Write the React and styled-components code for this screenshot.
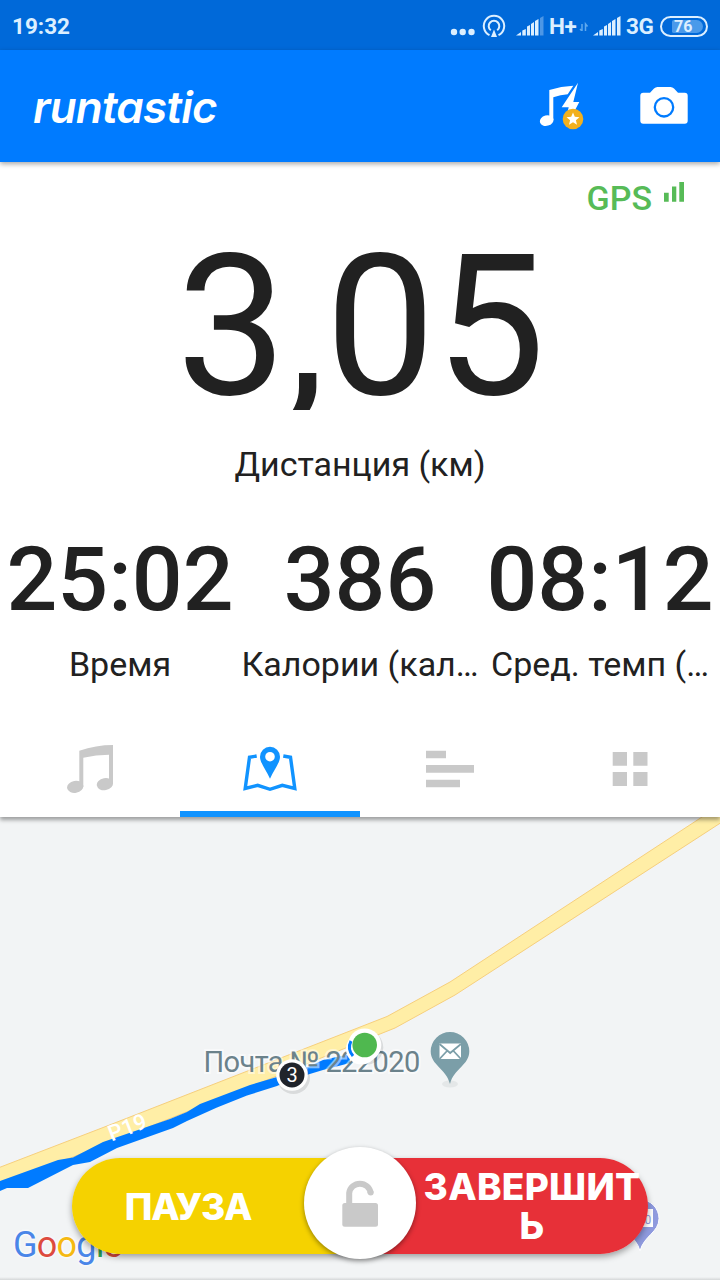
import React from 'react'
import styled, { createGlobalStyle } from 'styled-components'

const GlobalStyle = createGlobalStyle`
  * {
    box-sizing: border-box;
  }

  body {
    margin: 0;
    background: #fff;
    font-family: Roboto, sans-serif;
  }
`

const Screen = styled.div`
  display: flex;
  flex-direction: column;
  width: 720px;
  height: 1280px;
  overflow: hidden;
  color: #212121;
`

const Icon = styled.svg`
  display: block;
  flex: none;
`

const StatusBar = styled.div`
  display: flex;
  align-items: center;
  justify-content: space-between;
  flex: none;
  height: 50px;
  padding: 2px 12px 0 12px;
  background: #0069d9;
  color: #dcefff;
`

const Clock = styled.span`
  font-size: 22.5px;
  font-weight: 700;
`

const StatusIcons = styled.div`
  display: flex;
  align-items: center;
`

const Network = styled.span`
  width: 28px;
  margin-left: 5px;
  font-size: 22.5px;
  font-weight: 700;
  letter-spacing: -0.5px;
  white-space: nowrap;
`

const Battery = styled.div`
  display: flex;
  align-items: center;
  width: 48px;
  height: 21px;
  margin-left: 6px;
  padding-left: 10px;
  border: 2px solid #dcefff;
  border-radius: 11px;
`

const Charge = styled.div`
  width: 31px;
  height: 13px;
  padding-left: 2px;
  border-radius: 2px 7px 7px 2px;
  background: #4a9aea;
  font-size: 16px;
  font-weight: 700;
  line-height: 13px;
`

const AppBar = styled.header`
  position: relative;
  z-index: 1;
  display: flex;
  align-items: center;
  flex: none;
  height: 112px;
  padding: 0 32px 0 33px;
  background: #007bff;
  box-shadow: 0 2px 5px rgba(0, 0, 0, 0.35);
`

const Logo = styled.div`
  flex: 1;
  padding-top: 2px;
  color: #fff;
  font-family: Inter, sans-serif;
  font-feature-settings: 'cv11';
  font-size: 44px;
  font-style: italic;
  font-weight: 600;
  letter-spacing: -0.8px;
`

const Actions = styled.div`
  display: flex;
  align-items: center;
  gap: 56px;
`

const Stats = styled.main`
  display: flex;
  flex-direction: column;
  flex: none;
  height: 558px;
`

const Gps = styled.div`
  display: flex;
  justify-content: flex-end;
  gap: 12px;
  height: 60px;
  padding: 16px 35px 0 0;
  color: #57bb57;
  font-size: 34px;
  font-weight: 500;
  line-height: 40px;
`

const GpsBars = styled(Icon)`
  margin-top: 4px;
`

const Distance = styled.div`
  height: 188px;
  margin-bottom: 32px;
  padding-left: 2px;
  overflow: hidden;
  font-size: 196px;
  line-height: 211px;
  text-align: center;
`

const Label = styled.div`
  font-size: 34px;
  line-height: 44px;
  text-align: center;
  white-space: nowrap;
`

const Row = styled.div`
  display: grid;
  grid-template-columns: repeat(3, 240px);
  margin-top: 40px;
`

const Value = styled.div`
  height: 116px;
  font-size: 89.5px;
  font-weight: 500;
  line-height: 108px;
  text-align: center;
`

const Tabs = styled.nav`
  position: relative;
  z-index: 1;
  display: grid;
  grid-template-columns: repeat(4, 1fr);
  flex: none;
  height: 97px;
  background: #fff;
  box-shadow: 0 3px 4px rgba(0, 0, 0, 0.35);
  clip-path: inset(0 0 -10px 0);
`

const Tab = styled.div`
  display: flex;
  align-items: center;
  justify-content: center;
  padding-top: 6px;
  border-bottom: 6px solid ${({ $active }) => ($active ? '#1093ff' : 'transparent')};
  color: ${({ $active }) => ($active ? '#1093ff' : '#c9c9c9')};
`

const Map = styled.section`
  position: relative;
  flex: 1;
  background: linear-gradient(#f2f4f5 460px, #d5d7d8);
`

const MapLabel = styled.text`
  fill: #6b828b;
  stroke: rgba(255, 255, 255, 0.5);
  stroke-width: 4px;
  paint-order: stroke;
  font-size: 29px;
  letter-spacing: -0.6px;
`

const Google = styled.div`
  position: absolute;
  left: 13px;
  bottom: 12px;
  font-size: 36px;
  font-weight: 400;
  letter-spacing: -0.8px;
  line-height: 46px;
  text-shadow: 0 0 3px #fff, 0 0 3px #fff;
`

const Letter = styled.span`
  color: ${({ $color }) => $color};
`

const Controls = styled.div`
  position: absolute;
  left: 72px;
  bottom: 26px;
  display: flex;
  width: 576px;
  height: 96px;
  border-radius: 48px;
  box-shadow: 0 3px 6px rgba(0, 0, 0, 0.35);
`

const Button = styled.button`
  display: flex;
  align-items: center;
  justify-content: center;
  width: 288px;
  padding: ${({ $end }) => ($end ? '0 0 0 56px' : '0 56px 0 0')};
  border: 0;
  border-radius: ${({ $end }) => ($end ? '0 48px 48px 0' : '48px 0 0 48px')};
  background: ${({ $end }) => ($end ? '#e73038' : '#f5d200')};
  color: #fff;
  font-family: Inter, sans-serif;
  font-size: 37px;
  font-weight: 800;
  letter-spacing: ${({ $end }) => ($end ? '0.3px' : '-1.2px')};
  line-height: 39px;
`

const Lock = styled.div`
  position: absolute;
  left: 232px;
  top: -11px;
  display: flex;
  align-items: center;
  justify-content: center;
  width: 112px;
  height: 112px;
  border-radius: 50%;
  background: #fff;
  color: #c9c9c9;
  box-shadow: 0 2px 5px rgba(0, 0, 0, 0.4);
`

const Signal = ({ weak }) => (
  <Icon width="28" height="20" viewBox="0 0 28 20" fill="#dcefff">
    <path d="M0 19.500 5 16v3.500zM6.300 14.500l3.500-1.500v6.500H6.300zM11 10.500l3-1.500v10.500h-3zM15 8l3-2v13.500h-3zM19 5l3.500-2v16.500H19z" />
    <path d="M24 2l3.500-2v19.500H24z" opacity={weak ? 0.35 : 1} />
  </Icon>
)

const Status = () => (
  <StatusBar>
    <Clock>19:32</Clock>
    <StatusIcons>
      <Icon width="66" height="24" viewBox="450 13 66 24" fill="#dcefff">
        <circle cx="454" cy="31" r="3.200" />
        <circle cx="462.700" cy="31" r="3.200" />
        <circle cx="471.500" cy="31" r="3.200" />
        <path d="M489.500 34.200a10.200 10.200 0 1 1 9 0M490.800 29.300a5.300 5.300 0 1 1 6.400 0" fill="none" stroke="#dcefff" strokeWidth="2" />
        <path d="M494 28.500l3 7.500h-6z" />
      </Icon>
      <Signal weak />
      <Network>H+</Network>
      <Icon width="16" height="10" viewBox="-1 -3 16 10" fill="none" stroke="#5fa9ee" strokeWidth="1.500">
        <path d="M4 0v7L2 5M7.500 7V0l2 2.500" />
      </Icon>
      <Signal />
      <Network>3G</Network>
      <Battery>
        <Charge>76</Charge>
      </Battery>
    </StatusIcons>
  </StatusBar>
)

const PowerSongIcon = () => (
  <Icon width="45" height="48" viewBox="539 82 45 48" fill="#fff">
    <path d="M549.300 90q12-4 24-4.300l-5.600 8.600q-7 .5-14.400 3V120h-4z" />
    <ellipse cx="546.700" cy="120.600" rx="6.900" ry="5.200" transform="rotate(-15 546.700 120.600)" />
    <path d="M578 82.700l-16.300 24.600h7L567 114h6l6.300-12h-6z" />
    <circle cx="573" cy="119" r="10.300" fill="#f2b01e" />
    <path d="M573 112.500l1.800 4.300 4.700.4-3.600 3 1.100 4.600-4-2.500-4 2.500 1.100-4.600-3.600-3 4.700-.4z" />
  </Icon>
)

const CameraIcon = () => (
  <Icon width="48" height="40" viewBox="640 87 48 40" fill="#fff">
    <path d="M643.300 93.700H650l4-4.200q1.500-1.500 3.500-1.500h13q2 0 3.500 1.500l4 4.200h6.700q3 0 3 3v25q0 3-3 3h-41.400q-3 0-3-3v-25q0-3 3-3z" />
    <circle cx="664" cy="108.300" r="9.200" stroke="#007bff" strokeWidth="2.300" />
  </Icon>
)

const MusicIcon = () => (
  <Icon width="48" height="50" viewBox="66 744 48 50" fill="currentColor">
    <path d="M79.300 750.700Q96 745 113 745v39h-4v-29.300q-13 0-25.700 3V787h-4z" />
    <ellipse cx="75.200" cy="786.800" rx="8.200" ry="6" transform="rotate(-10 75.200 786.800)" />
    <ellipse cx="104.900" cy="784.200" rx="8.200" ry="6" transform="rotate(-10 104.900 784.200)" />
  </Icon>
)

const MapIcon = () => (
  <Icon width="56" height="50" viewBox="242 744 56 50">
    <path d="M256.700 756l-7.200 1.300-4.300 31.200 12.500-3.200 12.300 4 12.300-4 12.500 3.200-4.300-31.200-7.200-1.300" fill="none" stroke="currentColor" strokeWidth="3.400" />
    <path d="M270 746.700a10 10 0 0 1 10 10c0 6-6 13-10 22-4-9-10-16-10-22a10 10 0 0 1 10-10zm0 5.200a4.800 4.800 0 1 0 0 9.600 4.800 4.800 0 0 0 0-9.600z" fill="currentColor" />
  </Icon>
)

const SplitsIcon = () => (
  <Icon width="48" height="50" viewBox="426 744 48 50" fill="currentColor">
    <path d="M426 750.700h20v7.600h-20zM426 765h48v7.700h-48zM426 779.700h34v7.600h-34z" />
  </Icon>
)

const GridIcon = () => (
  <Icon width="36" height="50" viewBox="612 744 36 50" fill="currentColor">
    <path d="M612.700 752H627v13.700h-14.300zM633.300 752h14.200v13.700h-14.200zM612.700 772H627v14h-14.300zM633.300 772h14.200v14h-14.200z" />
  </Icon>
)

const LockIcon = () => (
  <Icon width="36" height="48" viewBox="342 1179 36 48">
    <path d="M349.200 1205v-12a10.800 10.800 0 0 1 21.400 0" fill="none" stroke="currentColor" strokeWidth="6" />
    <circle cx="370.700" cy="1192.500" r="3" fill="currentColor" />
    <rect x="342.300" y="1203" width="35.700" height="23.700" rx="2.500" fill="currentColor" />
  </Icon>
)

const RouteMap = () => (
  <Icon width="720" height="463" viewBox="0 817 720 463">
    <path
      d="M-2 1168 107 1126 190 1093.500 387 1016.500 450 982 702 817 722 804V822L455 995 395 1028 380 1034 267 1080 73 1157-2 1184z"
      fill="#ffeea6"
      stroke="#f6cf7d"
      strokeWidth="1"
    />
    <path
      d="M0 1181 58 1160 73 1157.500 103 1142 170 1119 187 1112 200 1104 250 1085 277 1077 308 1067 323 1060 350 1054V1063L323 1070 290 1080 277 1086 247 1095.500 217 1107.500 187 1121 173 1128 117 1148 90 1162 73 1165 28 1188H7L0 1191z"
      fill="#007bff"
    />
    <text x="111.500" y="1141.500" transform="rotate(-21 111.500 1141.500)" fill="#fff" fontSize="22" fontWeight="500" letterSpacing=".3">P19</text>
    <MapLabel x="203.500" y="1072">Почта № 222020</MapLabel>
    <ellipse cx="450" cy="1084" rx="8" ry="3.500" fill="#e4e7e8" />
    <path d="M450 1032a19.300 19.300 0 0 1 19.300 19.300c0 14-15.300 17-19.300 32.700-4-15.700-19.300-18.700-19.300-32.700A19.300 19.300 0 0 1 450 1032z" fill="#7b9ea8" />
    <path d="M439.500 1043.500H461v15.500h-21.500z" fill="#fff" />
    <path d="M439.500 1044l10.700 9 10.800-9M439.500 1059l7.500-8M461 1059l-7.500-8" fill="none" stroke="#7b9ea8" strokeWidth="1.800" />
    <path d="M640 1199.500a19 19 0 0 1 19 19c0 14-15 17-19 32.500-4-15.500-19-18.500-19-32.500a19 19 0 0 1 19-19z" fill="#8f9ade" stroke="#fff" strokeWidth="1" />
    <path d="M627 1209h26v18h-26z" fill="#fff" />
    <text x="644.500" y="1224" fill="#8f9ade" fontSize="12">0</text>
    <circle cx="293.500" cy="1077.500" r="16.500" fill="#000" opacity=".1" />
    <circle cx="292" cy="1075" r="15.800" fill="#fff" />
    <circle cx="292" cy="1075" r="12.500" fill="#20242b" />
    <text x="292" y="1082" fill="#fff" fontSize="20" textAnchor="middle">3</text>
    <circle cx="366" cy="1047.500" r="17.300" fill="#000" opacity=".1" />
    <circle cx="361.500" cy="1049" r="15.500" fill="#fff" />
    <circle cx="364.700" cy="1045" r="16.600" fill="#fff" />
    <path d="M351 1041q-4 8 2 15" fill="none" stroke="#007bff" strokeWidth="3" />
    <circle cx="364.700" cy="1045" r="12.300" fill="#4fb84f" />
  </Icon>
)

const stats = [
  { value: '25:02', label: 'Время' },
  { value: '386', label: 'Калории (кал…' },
  { value: '08:12', label: 'Сред. темп (…' },
]

const googleLetters = [
  ['G', '#4a86e8'],
  ['o', '#dd4b3e'],
  ['o', '#f5b912'],
  ['g', '#4a86e8'],
  ['l', '#2fa352'],
  ['e', '#dd4b3e'],
]

const App = () => (
  <Screen>
    <GlobalStyle />
    <Status />
    <AppBar>
      <Logo>runtastic</Logo>
      <Actions>
        <PowerSongIcon />
        <CameraIcon />
      </Actions>
    </AppBar>
    <Stats>
      <Gps>
        GPS
        <GpsBars width="21" height="21" viewBox="664 182.500 21 21" fill="currentColor">
          <path d="M664 193.300h4.700v9H664zM672 187h4.300v15.300H672zM679.300 181.700h4.700v20.600h-4.700z" />
        </GpsBars>
      </Gps>
      <Distance>3,05</Distance>
      <Label>Дистанция (км)</Label>
      <Row>
        {stats.map((stat) => (
          <div key={stat.label}>
            <Value>{stat.value}</Value>
            <Label>{stat.label}</Label>
          </div>
        ))}
      </Row>
    </Stats>
    <Tabs>
      <Tab><MusicIcon /></Tab>
      <Tab $active><MapIcon /></Tab>
      <Tab><SplitsIcon /></Tab>
      <Tab><GridIcon /></Tab>
    </Tabs>
    <Map>
      <RouteMap />
      <Google>
        {googleLetters.map(([letter, color], i) => (
          <Letter key={i} $color={color}>{letter}</Letter>
        ))}
      </Google>
      <Controls>
        <Button>ПАУЗА</Button>
        <Button $end>ЗАВЕРШИТ<br />Ь</Button>
        <Lock><LockIcon /></Lock>
      </Controls>
    </Map>
  </Screen>
)

export default App
